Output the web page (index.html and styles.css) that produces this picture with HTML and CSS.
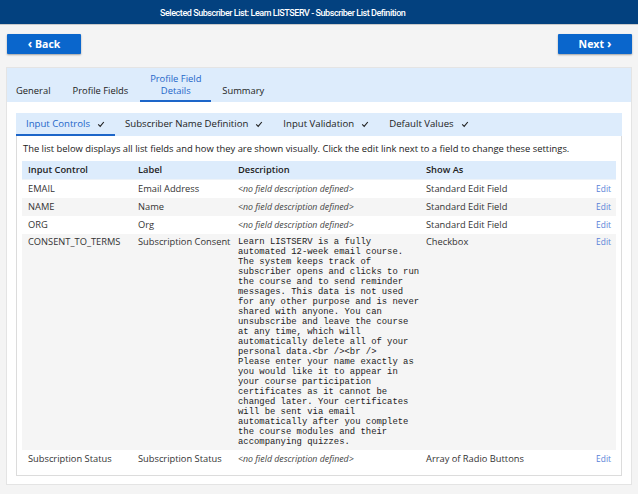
FILE: index.html
```html
<!DOCTYPE html>
<html>
<head>
<meta charset="utf-8">
<link rel="stylesheet" href="styles.css">
</head>
<body>
<header class="topbar"><span class="title">Selected Subscriber List: Learn LISTSERV - Subscriber List Definition</span></header>
<div class="nav">
  <button class="btn"><span class="chev left">‹</span>Back</button>
  <button class="btn">Next<span class="chev right">›</span></button>
</div>
<div class="card">
  <div class="tabs">
    <div class="tab">General</div>
    <div class="tab">Profile Fields</div>
    <div class="tab active">Profile Field<br>Details</div>
    <div class="tab">Summary</div>
  </div>
  <div class="inner">
    <div class="subtabs">
      <div class="subtab active">Input Controls <svg class="chk" viewBox="0 0 10 10"><path d="M1.5 5.5 L4 8 L8.5 2.5"/></svg></div>
      <div class="subtab">Subscriber Name Definition <svg class="chk" viewBox="0 0 10 10"><path d="M1.5 5.5 L4 8 L8.5 2.5"/></svg></div>
      <div class="subtab">Input Validation <svg class="chk" viewBox="0 0 10 10"><path d="M1.5 5.5 L4 8 L8.5 2.5"/></svg></div>
      <div class="subtab">Default Values <svg class="chk" viewBox="0 0 10 10"><path d="M1.5 5.5 L4 8 L8.5 2.5"/></svg></div>
    </div>
    <div class="panel">
      <p class="intro">The list below displays all list fields and how they are shown visually. Click the edit link next to a field to change these settings.</p>
      <table class="grid">
        <colgroup><col class="c1"><col class="c2"><col class="c3"><col class="c4"><col class="c5"></colgroup>
        <thead>
          <tr><th>Input Control</th><th>Label</th><th>Description</th><th>Show As</th><th></th></tr>
        </thead>
        <tbody>
          <tr><td>EMAIL</td><td>Email Address</td><td class="nodesc">&lt;no field description defined&gt;</td><td>Standard Edit Field</td><td class="edit">Edit</td></tr>
          <tr class="alt"><td>NAME</td><td>Name</td><td class="nodesc">&lt;no field description defined&gt;</td><td>Standard Edit Field</td><td class="edit">Edit</td></tr>
          <tr><td>ORG</td><td>Org</td><td class="nodesc">&lt;no field description defined&gt;</td><td>Standard Edit Field</td><td class="edit">Edit</td></tr>
          <tr class="alt tall"><td>CONSENT_TO_TERMS</td><td>Subscription Consent</td><td><pre class="mono">Learn LISTSERV is a fully
automated 12-week email course.
The system keeps track of
subscriber opens and clicks to run
the course and to send reminder
messages. This data is not used
for any other purpose and is never
shared with anyone. You can
unsubscribe and leave the course
at any time, which will
automatically delete all of your
personal data.&lt;br /&gt;&lt;br /&gt;
Please enter your name exactly as
you would like it to appear in
your course participation
certificates as it cannot be
changed later. Your certificates
will be sent via email
automatically after you complete
the course modules and their
accompanying quizzes.</pre></td><td>Checkbox</td><td class="edit">Edit</td></tr>
          <tr><td>Subscription Status</td><td>Subscription Status</td><td class="nodesc">&lt;no field description defined&gt;</td><td>Array of Radio Buttons</td><td class="edit">Edit</td></tr>
        </tbody>
      </table>
    </div>
  </div>
</div>
</body>
</html>
```
FILE: styles.css
```css
html, body { margin: 0; padding: 0; }
body {
  background: #f4f4f4;
  font-family: "Open Sans", "Liberation Sans", sans-serif;
  color: #222;
  width: 638px;
  height: 494px;
  overflow: hidden;
}
.topbar {
  height: 25px;
  background: #03417f;
  border-bottom: 1px solid #c9c9c9;
  display: flex;
  align-items: center;
  padding: 1px 0 0 160px;
  box-sizing: border-box;
}
.title {
  color: #fff;
  font-family: "Roboto", "Liberation Sans", sans-serif;
  font-weight: 500;
  font-size: 9px;
  letter-spacing: -0.45px;
}
.nav {
  display: flex;
  justify-content: space-between;
  padding: 9px 6px 0 7px;
}
.btn {
  width: 74px;
  height: 20px;
  border: none;
  border-radius: 1px;
  background: #0a66cc;
  color: #fff;
  font-family: "Open Sans", sans-serif;
  font-weight: 700;
  font-size: 10.5px;
  box-shadow: 0 1px 2px rgba(0,0,0,0.35);
  padding: 0;
  display: flex;
  align-items: center;
  justify-content: center;
}
.chev { font-weight: 700; font-size: 12px; position: relative; top: -1px; }
.chev.left { margin-right: 3px; }
.chev.right { margin-left: 3px; }
.card {
  margin: 13px 6px 0 6px;
  height: 418px;
  background: #fff;
  border: 1px solid #e4e4e4;
  box-sizing: border-box;
}
.tabs {
  height: 34px;
  background: #ddecfc;
  display: flex;
  align-items: flex-end;
  padding-left: 2px;
}
.tab {
  font-size: 9.4px;
  font-weight: 500;
  line-height: 12px;
  padding: 0 7px 3px 7px;
  text-align: center;
  color: #222;
  border-bottom: 2px solid transparent;
}
.tab + .tab { margin-left: 8px; }
.tab.active {
  color: #1d66c9;
  border-bottom-color: #1d66c9;
  width: 57px;
  margin-left: 5px;
}
.tab.active + .tab { margin-left: 4px; }
.inner { padding: 11px 9px 0 9px; }
.subtabs {
  height: 23px;
  background: #ddecfc;
  display: flex;
  align-items: stretch;
}
.subtab {
  font-size: 9.6px;
  display: flex;
  align-items: center;
  padding: 0 10px;
  border-bottom: 2px solid transparent;
  color: #222;
  white-space: nowrap;
}
.subtab.active { color: #1d66c9; border-bottom-color: #1d66c9; }
.chk {
  width: 8px; height: 8px; margin-left: 7px;
  fill: none; stroke: #222; stroke-width: 1.4;
}
.panel {
  border: 1px solid #dcdcdc;
  border-top: none;
  height: 340px;
  box-sizing: border-box;
  padding: 0 5px 0 5px;
}
.intro {
  margin: 0;
  padding: 7px 0 0 1px;
  height: 19px;
  line-height: 12px;
  font-size: 9.4px;
  color: #222;
  box-sizing: border-box;
  white-space: nowrap;
}
.grid {
  margin-top: 6px;
  width: 594px;
  border-collapse: collapse;
  table-layout: fixed;
  font-size: 9.3px;
}
.c1 { width: 110px; } .c2 { width: 100px; } .c3 { width: 188px; } .c4 { width: 160px; } .c5 { width: 36px; }
.grid th {
  background: #ddecfc;
  font-weight: 600;
  text-align: left;
  height: 18px;
  padding: 0 6px;
  box-sizing: border-box;
  border-bottom: 1px solid #eef3f8;
}
.grid td {
  padding: 4px 6px 4px 6px;
  line-height: 10px;
  vertical-align: top;
  white-space: nowrap;
  color: #333;
}
.grid tr.tall td { padding-top: 3px; padding-bottom: 3px; }
.grid tr.alt td { background: #f5f5f5; }
.grid td.nodesc {
  font-style: italic;
  font-size: 8.8px;
  color: #444;
}
.grid td.edit {
  text-align: right;
  padding-right: 5px;
  color: #5a82d8;
  font-size: 8.4px;
}
.mono {
  margin: 0;
  font-family: "Liberation Mono", "Courier New", monospace;
  font-size: 8.9px;
  line-height: 10px;
  color: #222;
}
```
